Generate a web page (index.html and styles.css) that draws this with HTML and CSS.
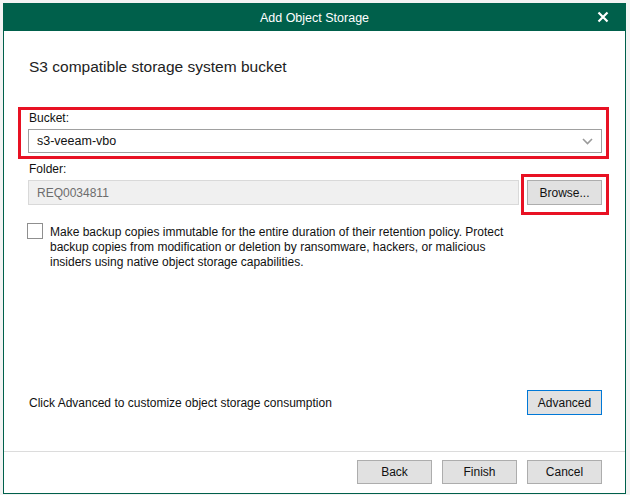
FILE: index.html
```html
<!DOCTYPE html>
<html lang="en">

<head>
    <meta charset="UTF-8">
    <meta name="viewport" content="width=device-width, initial-scale=1.0">
    <title>Add Object Storage</title>
    <link rel="stylesheet" href="styles.css">
</head>

<body>
    <div class="dialog">
        <div class="titlebar">
            <span class="title">Add Object Storage</span>
            <svg class="close" width="12" height="12" viewBox="0 0 12 12">
                <path d="M1.5 1.5 L10.5 10.5 M10.5 1.5 L1.5 10.5" stroke="#fff" stroke-width="2.2" />
            </svg>
        </div>

        <div class="content">
            <div class="heading">S3 compatible storage system bucket</div>

            <div class="label label-bucket">Bucket:</div>
            <div class="combo">
                <span>s3-veeam-vbo</span>
                <svg width="11" height="7" viewBox="0 0 11 7">
                    <polyline points="1,1 5.5,5.5 10,1" fill="none" stroke="#9a9a9a" stroke-width="1.6" />
                </svg>
            </div>

            <div class="label label-folder">Folder:</div>
            <div class="folder-row">
                <div class="input disabled">REQ0034811</div>
                <div class="btn">Browse...</div>
            </div>

            <div class="check-row">
                <div class="checkbox"></div>
                <div class="check-text">
                    Make backup copies immutable for the entire duration of their retention policy. Protect<br>
                    backup copies from modification or deletion by ransomware, hackers, or malicious<br>
                    insiders using native object storage capabilities.
                </div>
            </div>

            <div class="advanced-row">
                <span>Click Advanced to customize object storage consumption</span>
                <div class="btn btn-default">Advanced</div>
            </div>
        </div>

        <div class="footer">
            <div class="btn">Back</div>
            <div class="btn">Finish</div>
            <div class="btn">Cancel</div>
        </div>

        <!-- highlight marks -->
        <div class="mark mark-bucket"></div>
        <div class="mark mark-browse"></div>
    </div>
</body>

</html>
```

FILE: styles.css
```css
body {
    font-family: 'Segoe UI', 'Liberation Sans', Arial, sans-serif;
    font-size: 12px;
    margin: 0;
    padding: 3px;
    background-color: #f3f3f3;
    color: #111;
}

.dialog {
    position: relative;
    box-sizing: border-box;
    width: 623px;
    height: 491px;
    border: 1px solid #00604b;
    background-color: white;
    display: flex;
    flex-direction: column;
}

.titlebar {
    height: 27px;
    background-color: #00604b;
    color: white;
    display: flex;
    align-items: center;
    justify-content: center;
    position: relative;
}

.title {
    font-size: 12.5px;
}

.close {
    position: absolute;
    right: 16px;
    top: 7px;
}

.content {
    height: 420px;
    box-sizing: border-box;
    padding: 26px 23px 36px 24px;
    display: flex;
    flex-direction: column;
}

.heading {
    font-size: 15.5px;
    line-height: 20px;
    padding-left: 1px;
    color: #222;
}

.label {
    line-height: 15px;
    padding-left: 1px;
}

.label-bucket {
    margin-top: 34px;
}

.label-folder {
    margin-top: 9px;
}

.combo {
    margin-top: 3px;
    height: 24px;
    box-sizing: border-box;
    border: 1px solid #a0a0a0;
    padding: 0 8px;
    display: flex;
    align-items: center;
    justify-content: space-between;
    font-size: 12.5px;
}

.folder-row {
    margin-top: 3px;
    display: flex;
    gap: 8px;
}

.input {
    flex: 1;
    height: 25px;
    box-sizing: border-box;
    border: 1px solid #d9d9d9;
    padding: 0 8px;
    display: flex;
    align-items: center;
}

.input.disabled {
    background-color: #f0f0f0;
    color: #6d6d6d;
}

.btn {
    width: 75px;
    height: 25px;
    box-sizing: border-box;
    border: 1px solid #adadad;
    background-color: #e1e1e1;
    display: flex;
    align-items: center;
    justify-content: center;
    color: #111;
}

.btn-default {
    border-color: #0078d7;
}

.check-row {
    margin-top: 20px;
    display: flex;
    gap: 7px;
}

.checkbox {
    width: 16px;
    height: 16px;
    box-sizing: border-box;
    border: 1px solid #8f8f8f;
    margin-top: -2px;
    margin-left: -1px;
}

.check-text {
    line-height: 15px;
}

.advanced-row {
    margin-top: auto;
    display: flex;
    align-items: center;
    justify-content: space-between;
    padding-left: 1px;
}

.footer {
    border-top: 1px solid #dcdcdc;
    padding: 8px 23px 9px 0;
    display: flex;
    justify-content: flex-end;
    gap: 10px;
}

.footer .btn {
    height: 24px;
}

.mark {
    position: absolute;
    box-sizing: border-box;
    border: 3px solid #e81123;
}

.mark-bucket {
    left: 14px;
    top: 103px;
    width: 591px;
    height: 52px;
}

.mark-browse {
    left: 517px;
    top: 170px;
    width: 88px;
    height: 41px;
}
```
